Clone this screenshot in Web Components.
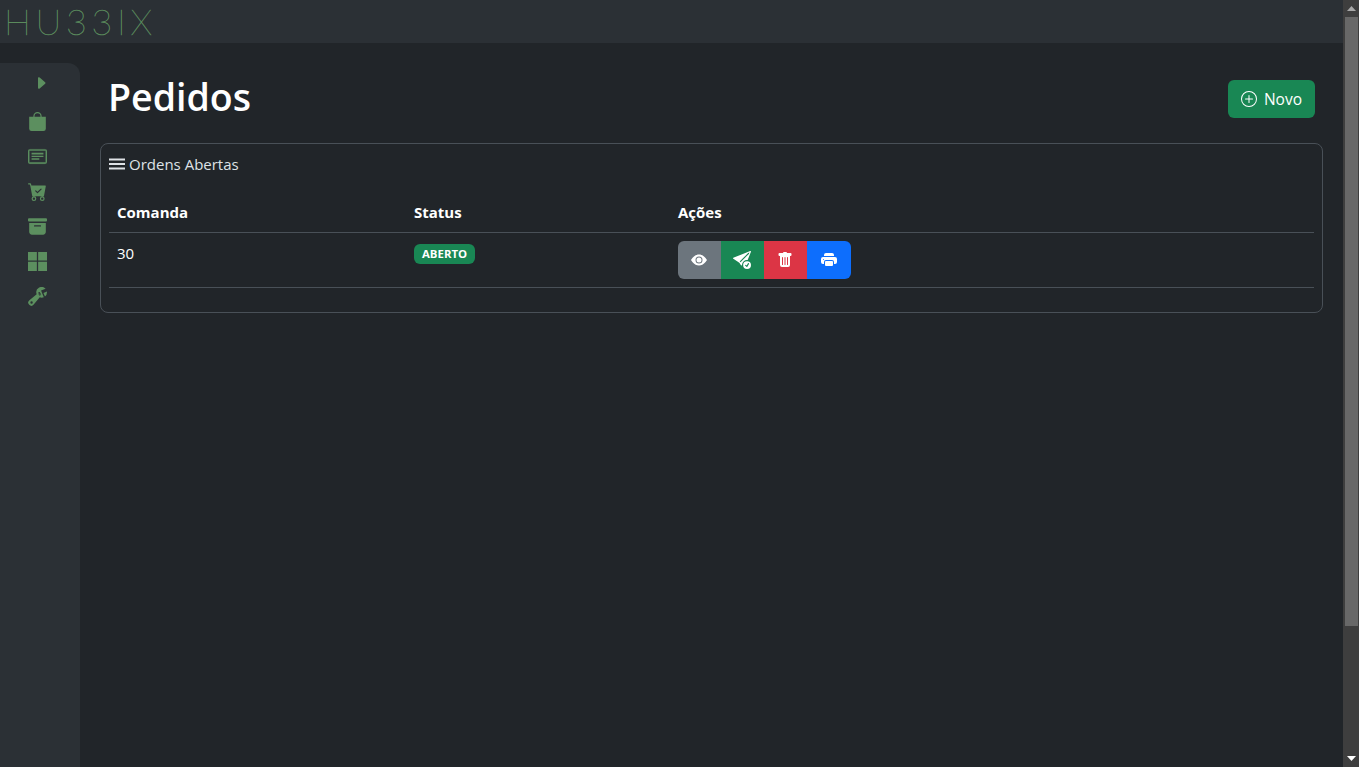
<!DOCTYPE html>
<html lang="pt-BR">
<head>
<meta charset="utf-8">
<title>Pedidos</title>
<style>
  html, body { margin: 0; height: 100%; overflow: hidden; background: #212529; }
  body { font-family: "Open Sans", "Noto Sans", sans-serif; font-size: 15px; color: #fff; }
</style>
</head>
<body>
<app-shell>
  <top-bar>HU33IX</top-bar>
  <side-nav slot="nav"></side-nav>
  <page-header slot="content" titulo="Pedidos"></page-header>
  <orders-card slot="content" titulo="Ordens Abertas">
    <orders-table></orders-table>
  </orders-card>
</app-shell>

<script>
// icones do bootstrap-icons (viewBox 16)
const ICONS = {
  caret: '<path d="m12.14 8.753-5.482 4.796c-.646.566-1.658.106-1.658-.753V3.204a1 1 0 0 1 1.659-.753l5.48 4.796a1 1 0 0 1 0 1.506z"/>',
  bag: '<path d="M8 1a2.5 2.5 0 0 1 2.5 2.5V4h-5v-.5A2.5 2.5 0 0 1 8 1zm3.5 3v-.5a3.5 3.5 0 1 0-7 0V4H1v10a2 2 0 0 0 2 2h10a2 2 0 0 0 2-2V4h-3.5z"/>',
  card: '<path stroke="currentColor" stroke-width=".4" d="M14.5 3a.5.5 0 0 1 .5.5v9a.5.5 0 0 1-.5.5h-13a.5.5 0 0 1-.5-.5v-9a.5.5 0 0 1 .5-.5h13zm-13-1A1.5 1.5 0 0 0 0 3.500v9A1.5 1.5 0 0 0 1.5 14h13a1.5 1.5 0 0 0 1.5-1.5v-9A1.5 1.5 0 0 0 14.5 2h-13z"/><path d="M3 4.800h10v1.500H3zM3 7.300h10v1.200H3zM3 9.500h6.500v1.200H3z"/>',
  cart: '<path d="M.5 1a.5.5 0 0 0 0 1h1.11l.401 1.607 1.498 7.985A.5.5 0 0 0 4 12h1a2 2 0 1 0 0 4 2 2 0 0 0 0-4h7a2 2 0 1 0 0 4 2 2 0 0 0 0-4h1a.5.5 0 0 0 .491-.408l1.5-8A.5.5 0 0 0 14.5 3H2.89l-.405-1.621A.5.5 0 0 0 2 1H.5zM6 14a1 1 0 1 1-2 0 1 1 0 0 1 2 0zm7 0a1 1 0 1 1-2 0 1 1 0 0 1 2 0zm-1.646-7.646-3 3a.5.5 0 0 1-.708 0l-1.5-1.5a.5.5 0 1 1 .708-.708L8 8.293l2.646-2.647a.5.5 0 0 1 .708.708z"/>',
  archive: '<path d="M12.643 15C13.979 15 15 13.845 15 12.5V5H1v7.5C1 13.845 2.021 15 3.357 15h9.286zM5.500 7h5a.5.5 0 0 1 0 1h-5a.5.5 0 0 1 0-1zM.8 1a.8.8 0 0 0-.8.8V3a.8.8 0 0 0 .8.8h14.400A.8.8 0 0 0 16 3V1.800a.8.8 0 0 0-.8-.8H.8z"/>',
  grid: '<path d="M7.462 0H0v7.19h7.462V0zM16 0H8.538v7.19H16V0zM7.462 8.211H0V16h7.462V8.211zm8.538 0H8.538V16H16V8.211z"/>',
  wrench: '<path d="M16 4.500a4.492 4.492 0 0 1-1.703 3.526L13 5l2.959-1.110c.027.2.041.403.041.61Z"/><path d="M11.500 9c.653 0 1.273-.139 1.833-.39L12 5.500 11 3l3.826-1.530A4.500 4.500 0 0 0 7.290 6.092l-6.116 5.096a2.583 2.583 0 1 0 3.638 3.638L9.908 8.710A4.490 4.490 0 0 0 11.500 9Zm-1.292-4.361-.596.893.809-.27a.25.25 0 0 1 .287.377l-.596.893.809-.27.158.475-1.500.5a.25.25 0 0 1-.287-.377l.596-.893-.809.27a.25.25 0 0 1-.287-.377l.596-.893-.809.27-.158-.475 1.500-.5a.25.25 0 0 1 .287.377ZM3 14a1 1 0 1 1 0-2 1 1 0 0 1 0 2Z"/>',
  eye: '<path d="M10.500 8a2.500 2.500 0 1 1-5 0 2.500 2.500 0 0 1 5 0z"/><path d="M0 8s3-5.500 8-5.500S16 8 16 8s-3 5.500-8 5.500S0 8 0 8zm8 3.500a3.500 3.500 0 1 0 0-7 3.500 3.500 0 0 0 0 7z"/>',
  send: '<path d="M15.964.686a.5.5 0 0 0-.65-.65L.767 5.855H.766l-.452.18a.5.5 0 0 0-.082.887l.41.26.001.002 4.995 3.178 1.590 2.498C8 13 8 12.500 8 12.500a4.500 4.500 0 0 1 5.026-4.470L15.964.686Zm-1.833 1.890L6.637 10.070l-.215-.338a.5.5 0 0 0-.154-.154l-.338-.215 7.494-7.494 1.178-.471-.47 1.178Z"/><path d="M16 12.500a3.500 3.500 0 1 1-7 0 3.500 3.500 0 0 1 7 0Zm-1.993-1.679a.5.5 0 0 0-.686.172l-1.170 1.950-.547-.547a.5.5 0 0 0-.708.708l.774.773a.75.75 0 0 0 1.174-.144l1.335-2.226a.5.5 0 0 0-.172-.686Z"/>',
  trash: '<path d="M2.500 1a1 1 0 0 0-1 1v1a1 1 0 0 0 1 1H3v9a2 2 0 0 0 2 2h6a2 2 0 0 0 2-2V4h.5a1 1 0 0 0 1-1V2a1 1 0 0 0-1-1H10a1 1 0 0 0-1-1H7a1 1 0 0 0-1 1H2.500zm3 4a.5.5 0 0 1 .5.5v7a.5.5 0 0 1-1 0v-7a.5.5 0 0 1 .5-.5zM8 5a.5.5 0 0 1 .5.5v7a.5.5 0 0 1-1 0v-7A.5.5 0 0 1 8 5zm3 .5v7a.5.5 0 0 1-1 0v-7a.5.5 0 0 1 1 0z"/>',
  printer: '<path d="M5 1a2 2 0 0 0-2 2v1h10V3a2 2 0 0 0-2-2H5zm6 8H5a1 1 0 0 0-1 1v3a1 1 0 0 0 1 1h6a1 1 0 0 0 1-1v-3a1 1 0 0 0-1-1z"/><path d="M0 7a2 2 0 0 1 2-2h12a2 2 0 0 1 2 2v3a2 2 0 0 1-2 2h-1v-2a2 2 0 0 0-2-2H5a2 2 0 0 0-2 2v2H2a2 2 0 0 1-2-2V7zm2.500 1a.5.5 0 1 0 0-1 .5.5 0 0 0 0 1z"/>',
  plus: '<path d="M8 15A7 7 0 1 1 8 1a7 7 0 0 1 0 14zm0 1A8 8 0 1 0 8 0a8 8 0 0 0 0 16z"/><path d="M8 4a.5.5 0 0 1 .5.5v3h3a.5.5 0 0 1 0 1h-3v3a.5.5 0 0 1-1 0v-3h-3a.5.5 0 0 1 0-1h3v-3A.5.5 0 0 1 8 4z"/>',
  list: '<rect y="2.500" width="16" height="2"/><rect y="7" width="16" height="2"/><rect y="11.500" width="16" height="2"/>'
};

const icon = (name, size = 16) =>
  `<svg xmlns="http://www.w3.org/2000/svg" width="${size}" height="${size}" viewBox="0 0 16 16" fill="currentColor" aria-hidden="true">${ICONS[name]}</svg>`;

class AppShell extends HTMLElement {
  constructor() {
    super();
    this.attachShadow({ mode: 'open' });
    this.shadowRoot.innerHTML = `
      <style>
        :host { display: flex; height: 100vh; }
        .page { flex: 1; min-width: 0; display: flex; flex-direction: column; }
        .body { flex: 1; display: flex; min-height: 0; }
        main { flex: 1; min-width: 0; padding: 30px 20px 0; }
      </style>
      <div class="page">
        <slot></slot>
        <div class="body">
          <slot name="nav"></slot>
          <main><slot name="content"></slot></main>
        </div>
      </div>
      <fake-scrollbar></fake-scrollbar>`;
  }
}

class TopBar extends HTMLElement {
  constructor() {
    super();
    this.attachShadow({ mode: 'open' });
    this.shadowRoot.innerHTML = `
      <style>
        :host { display: flex; align-items: center; height: 43px; background: #2b3035; padding-left: 4px; box-sizing: border-box; overflow: hidden; }
        span { font: 100 36px/43px Lato, "Open Sans", sans-serif; letter-spacing: 4.6px; color: #5a8a5c; -webkit-text-stroke: .4px #5a8a5c; }
      </style>
      <span aria-label="HUBBIX"><slot></slot></span>`;
  }
}

class NavIcon extends HTMLElement {
  constructor() {
    super();
    this.attachShadow({ mode: 'open' });
  }
  connectedCallback() {
    const size = this.getAttribute('size') ?? '19';
    this.shadowRoot.innerHTML = `
      <style>
        :host { display: flex; align-items: center; justify-content: center; height: 35px; color: #5c8f5f; }
        svg { display: block; }
      </style>
      ${icon(this.getAttribute('name'), size)}`;
  }
}

class SideNav extends HTMLElement {
  constructor() {
    super();
    this.attachShadow({ mode: 'open' });
    this.shadowRoot.innerHTML = `
      <style>
        :host { display: block; flex: none; width: 80px; margin-top: 20px; background: #2b3035; border-top-right-radius: 12px; box-sizing: border-box; padding: 2px 5px 0 0; }
        .toggle { padding-left: 7px; height: 36px; margin-bottom: 3px; }
      </style>
      <nav-icon class="toggle" name="caret" size="16"></nav-icon>
      <nav-icon name="bag"></nav-icon>
      <nav-icon name="card"></nav-icon>
      <nav-icon name="cart"></nav-icon>
      <nav-icon name="archive"></nav-icon>
      <nav-icon name="grid"></nav-icon>
      <nav-icon name="wrench"></nav-icon>`;
  }
}

class PageHeader extends HTMLElement {
  constructor() {
    super();
    this.attachShadow({ mode: 'open' });
  }
  connectedCallback() {
    this.shadowRoot.innerHTML = `
      <style>
        :host { display: flex; justify-content: space-between; align-items: flex-start; padding: 0 8px; height: 70px; }
        h1 { margin: 0; font-size: 37.5px; line-height: 48px; font-weight: 600; color: #fff; }
        button { margin-top: 7px; display: flex; align-items: center; gap: 7px; height: 38px; padding: 0 13px; background: #198754; border: 0; border-radius: 6px; color: #fff; font: inherit; font-size: 15.5px; }
        svg { display: block; }
      </style>
      <h1>${this.getAttribute('titulo')}</h1>
      <button type="button">${icon('plus')}Novo</button>`;
  }
}

class OrdersCard extends HTMLElement {
  constructor() {
    super();
    this.attachShadow({ mode: 'open' });
  }
  connectedCallback() {
    this.shadowRoot.innerHTML = `
      <style>
        :host { display: block; border: 1px solid #495057; border-radius: 8px; padding: 8px 8px 24px; }
        .title { display: flex; align-items: center; gap: 4px; height: 24px; color: #dee2e6; margin-bottom: 16px; }
        svg { display: block; }
      </style>
      <div class="title">${icon('list')}<span>${this.getAttribute('titulo')}</span></div>
      <slot></slot>`;
  }
}

class StatusBadge extends HTMLElement {
  constructor() {
    super();
    this.attachShadow({ mode: 'open' });
    this.shadowRoot.innerHTML = `
      <style>
        :host { display: inline-block; vertical-align: top; margin-top: 3px; background: #198754; color: #fff; font-size: 11.4px; font-weight: 700; line-height: 12px; padding: 4px 8px; border-radius: 6px; text-transform: uppercase; }
      </style>
      <slot></slot>`;
  }
}

class ActionGroup extends HTMLElement {
  constructor() {
    super();
    this.attachShadow({ mode: 'open' });
    const buttons = [['eye', '#6c757d', 16], ['send', '#198754', 18], ['trash', '#dc3545', 16], ['printer', '#0d6efd', 16]];
    this.shadowRoot.innerHTML = `
      <style>
        :host { display: grid; grid-template-columns: 43px 43px 43px 44px; width: 173px; height: 38px; border-radius: 6px; overflow: hidden; }
        button { display: flex; align-items: center; justify-content: center; padding: 0 1px 0 0; border: 0; color: #fff; }
      </style>
      ${buttons.map(([name, bg, size]) => `<button type="button" style="background:${bg}">${icon(name, size)}</button>`).join('')}`;
  }
}

class OrdersTable extends HTMLElement {
  constructor() {
    super();
    this.attachShadow({ mode: 'open' });
    this.shadowRoot.innerHTML = `
      <style>
        :host { display: block; }
        table { width: 100%; border-collapse: collapse; table-layout: fixed; color: #fff; }
        th, td { padding: 8px; text-align: left; vertical-align: top; border-bottom: 1px solid #495057; line-height: 24px; }
        th { font-weight: 700; }
      </style>
      <table>
        <colgroup><col style="width:297px"><col style="width:264px"><col></colgroup>
        <thead><tr><th>Comanda</th><th>Status</th><th>Ações</th></tr></thead>
        <tbody><tr><td>30</td><td><status-badge>Aberto</status-badge></td><td><action-group></action-group></td></tr></tbody>
      </table>`;
  }
}

class FakeScrollbar extends HTMLElement {
  constructor() {
    super();
    this.attachShadow({ mode: 'open' });
    this.shadowRoot.innerHTML = `
      <style>
        :host { display: flex; flex-direction: column; flex: none; width: 16px; background: #3e3e3e; box-sizing: border-box; padding-left: 2px; padding-right: 1px; }
        .arrow { flex: none; height: 17px; display: flex; align-items: center; justify-content: center; }
        .arrow svg { display: block; }
        .thumb { flex: none; height: 609px; background: #686868; }
        .rest { flex: 1; }
      </style>
      <div class="arrow"><svg width="9" height="5" viewBox="0 0 9 5"><path d="M4.5 0 9 5H0z" fill="#a8a8a8"/></svg></div>
      <div class="thumb"></div>
      <div class="rest"></div>
      <div class="arrow"><svg width="9" height="5" viewBox="0 0 9 5"><path d="M0 0h9L4.500 5z" fill="#fff"/></svg></div>`;
  }
}

customElements.define('app-shell', AppShell);
customElements.define('top-bar', TopBar);
customElements.define('nav-icon', NavIcon);
customElements.define('side-nav', SideNav);
customElements.define('page-header', PageHeader);
customElements.define('orders-card', OrdersCard);
customElements.define('status-badge', StatusBadge);
customElements.define('action-group', ActionGroup);
customElements.define('orders-table', OrdersTable);
customElements.define('fake-scrollbar', FakeScrollbar);
</script>
</body>
</html>
